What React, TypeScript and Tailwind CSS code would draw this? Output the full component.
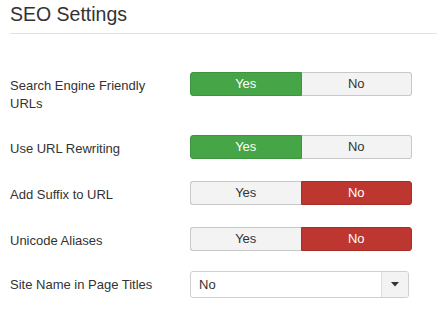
import { useState } from 'react';

type Choice = 'yes' | 'no';

interface ToggleRowProps {
  label: string;
  value: Choice;
  className?: string;
}

function YesNo({ value }: { value: Choice }) {
  const [current, setCurrent] = useState<Choice>(value);

  return (
    <div className="flex h-[24px] w-[222px] text-[13px] leading-[18px]">
      <button
        type="button"
        onClick={() => setCurrent('yes')}
        className={
          current === 'yes'
            ? 'flex-1 rounded-l-[3px] border border-[#3f943f] bg-[#46a546] text-white'
            : 'flex-1 rounded-l-[3px] border border-r-0 border-[#c8c8c8] bg-[#f3f3f3] text-[#333]'
        }
      >
        Yes
      </button>
      <button
        type="button"
        onClick={() => setCurrent('no')}
        className={
          current === 'no'
            ? 'flex-1 rounded-r-[3px] border border-[#a82f29] bg-[#bd362f] text-white'
            : 'flex-1 rounded-r-[3px] border border-l-0 border-[#c8c8c8] bg-[#f3f3f3] text-[#333]'
        }
      >
        No
      </button>
    </div>
  );
}

function ToggleRow({ label, value, className }: ToggleRowProps) {
  return (
    <div className={`flex items-start ${className ?? ''}`}>
      <label className="w-[180px] pr-[20px] pt-[5px] text-[13px] leading-[18px]">{label}</label>
      <YesNo value={value} />
    </div>
  );
}

export default function App() {
  return (
    <div
      className="min-h-[319px] bg-white pl-[10px] pt-[2px] text-[#333]"
      style={{ fontFamily: '"Liberation Sans", Arial, sans-serif' }}
    >
      <h2 className="border-b border-[#e3e3e3] pb-[7px] text-[19.5px] leading-[24px] font-normal">
        SEO Settings
      </h2>

      <ToggleRow className="mt-[38px]" label="Search Engine Friendly URLs" value="yes" />
      <ToggleRow className="mt-[22px]" label="Use URL Rewriting" value="yes" />
      <ToggleRow className="mt-[22px]" label="Add Suffix to URL" value="no" />
      <ToggleRow className="mt-[22px]" label="Unicode Aliases" value="no" />

      <div className="mt-[20px] flex items-start">
        <label className="w-[180px] pr-[20px] pt-[5px] text-[13px] leading-[18px]">
          Site Name in Page Titles
        </label>
        <div className="flex h-[27px] w-[219px] overflow-hidden rounded-[3px] border border-[#cfcfcf] bg-white text-[13px]">
          <span className="flex flex-1 items-center pl-[8px]">No</span>
          <span className="flex w-[27px] items-center justify-center border-l border-[#dcdcdc] bg-[#f3f3f3]">
            <svg width="8" height="5" viewBox="0 0 8 5">
              <path d="M0 0 H8 L4 4.5 Z" fill="#333" />
            </svg>
          </span>
        </div>
      </div>
    </div>
  );
}
